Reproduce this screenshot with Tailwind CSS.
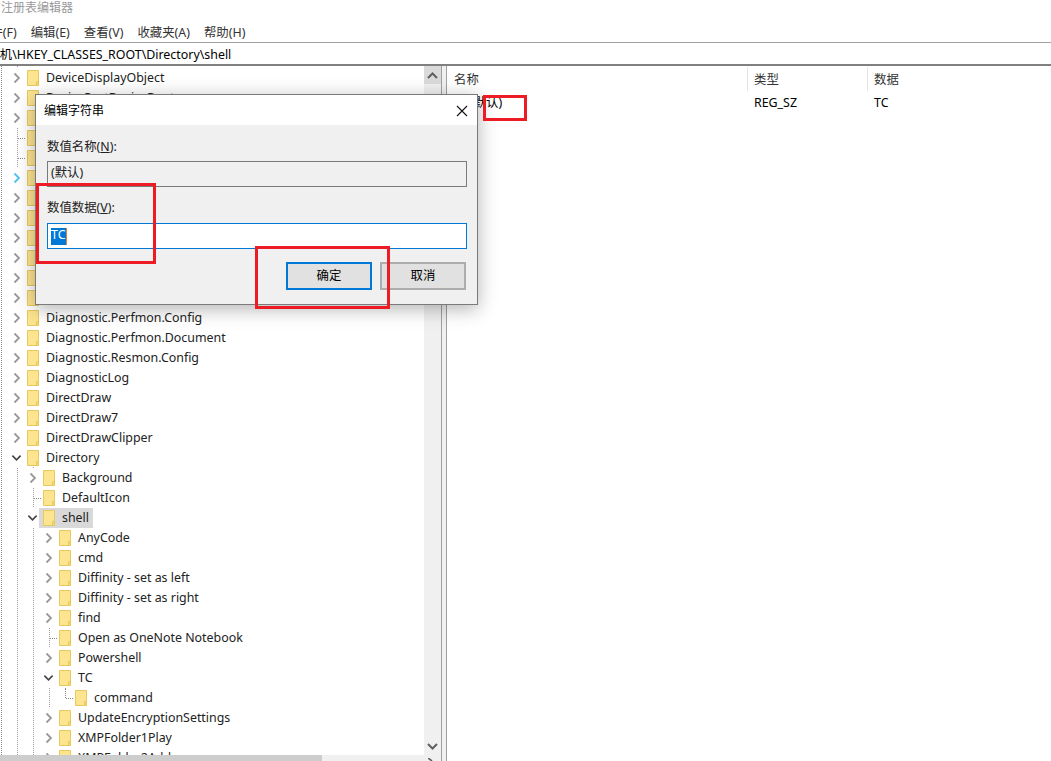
<!DOCTYPE html>
<html lang="zh-CN">
<head>
  <meta charset="UTF-8">
  <title>注册表编辑器</title>
  <script src="https://cdn.jsdelivr.net/npm/@tailwindcss/browser@4"></script>
</head>
<body class="bg-white overflow-hidden font-['Noto_Sans','Noto_Sans_CJK_SC',sans-serif] text-[12.4px] text-black">
<div class="relative w-[1051px] h-[761px] overflow-hidden flex flex-col">

  <!-- title -->
  <div class="h-[15px] pl-[1px] text-[12px] text-[#9a9a9a] leading-[16px] whitespace-nowrap">注册表编辑器</div>

  <!-- menu -->
  <div class="h-[26px] flex items-center gap-[14px] -ml-[22px] text-[#333] whitespace-nowrap pt-[11px]">
    <span>文件(F)</span><span>编辑(E)</span><span>查看(V)</span><span>收藏夹(A)</span><span>帮助(H)</span>
  </div>

  <!-- address bar -->
  <div class="h-[24px] mt-[1px] pt-[3px] border-t border-[#a0a0a0] border-b-2 border-b-[#808080] flex items-center -ml-[25px] whitespace-nowrap">计算机\HKEY_CLASSES_ROOT\Directory\shell</div>

  <div class="flex-1 flex min-h-0">
    <!-- tree -->
    <div class="w-[441px] shrink-0 relative flex flex-col overflow-hidden">
      <div class="flex flex-1 min-h-0">
        <div id="tree" class="w-[424px] pt-[2px] relative overflow-hidden">
          <div class="absolute left-[1px] top-0 bottom-0 border-l border-dotted border-[#8a8a8a]"></div>
          <div class="absolute left-[17px] top-0 bottom-0 border-l border-dotted border-[#a0a0a0]"></div>
          <div class="absolute left-[33px] top-[401px] bottom-0 border-l border-dotted border-[#a0a0a0]"></div>
          <div class="absolute left-[49px] top-[461px] bottom-0 border-l border-dotted border-[#a0a0a0]"></div>
        </div>
        <div class="w-[17px] bg-[#f0f0f0] flex flex-col justify-between items-center">
          <div class="w-full h-[18px] bg-[#dadada] flex items-center justify-center">
            <svg width="11" height="7" viewBox="0 0 11 7" fill="none" stroke="#606060" stroke-width="2"><path d="M1 6l4.5-4.5L10 6"/></svg>
          </div>
          <svg class="mb-[5px]" width="11" height="7" viewBox="0 0 11 7" fill="none" stroke="#606060" stroke-width="2"><path d="M1 1l4.5 4.5L10 1"/></svg>
        </div>
      </div>
      <div class="h-[6px] bg-[#f0f0f0] shrink-0 flex justify-between pr-[8px]">
        <div class="h-full w-[322px] bg-[#cdcdcd]"></div>
        <svg class="mt-[3px]" width="5" height="3" viewBox="0 0 5 3" fill="none" stroke="#606060" stroke-width="1.6"><path d="M0 0l4 3"/></svg>
      </div>
    </div>

    <!-- splitter -->
    <div class="w-[6px] border-l border-r border-[#a0a0a0] bg-[#f0f0f0] shrink-0"></div>

    <!-- values list -->
    <div class="flex-1 min-w-0 pt-[1px]">
      <div class="flex h-[24px] items-center text-[#333]">
        <div class="w-[301px] pl-[7px] pt-[2px] h-full flex items-center border-r border-[#e5e5e5]">名称</div>
        <div class="w-[120px] pl-[6px] pt-[2px] h-full flex items-center border-r border-[#e5e5e5]">类型</div>
        <div class="pl-[6px] pt-[2px]">数据</div>
      </div>
      <div class="flex h-[24px] items-center">
        <div class="w-[301px] pl-[5px] flex items-center gap-[2px]">
          <span class="w-4 h-4 border border-[#6a8fc0] bg-[#eef3fa] text-[9px] leading-[14px] text-center text-[#2a60b0]">ab</span>
          <span>(默认)</span>
        </div>
        <div class="w-[120px] pl-[6px]">REG_SZ</div>
        <div class="pl-[6px]">TC</div>
      </div>
    </div>
  </div>

  <!-- edit string dialog -->
  <div class="absolute left-[35px] top-[94px] w-[443px] h-[211px] border border-[#7a7a7a] bg-[#f0f0f0] shadow-[0_4px_18px_rgba(0,0,0,0.3)] flex flex-col">
    <div class="h-[30px] bg-white flex items-center justify-between pl-[8px] pr-[9px] pt-[1px] shrink-0 text-[12px]">
      <span>编辑字符串</span>
      <svg width="12" height="12" viewBox="0 0 12 12" fill="none" stroke="#111" stroke-width="1.1"><path d="M1 1l10 10M11 1L1 11"/></svg>
    </div>
    <div class="flex-1 px-[11px] flex flex-col">
      <div class="mt-[12px] h-[20px] leading-[20px] text-[#222]">数值名称(<u>N</u>):</div>
      <div class="mt-[4px] h-[26px] w-[420px] border border-[#7a7a7a] flex items-center pl-[3px] pb-[2px] text-[#222]">(默认)</div>
      <div class="mt-[11px] h-[20px] leading-[20px] text-[#222]">数值数据(<u>V</u>):</div>
      <div class="mt-[5px] h-[26px] w-[420px] border border-[#0078d7] bg-white flex items-center pl-[3px]">
        <span class="bg-[#0078d7] text-white h-[17px] leading-[14px] w-[16px] border-r border-[#e08030]">TC</span>
      </div>
      <div class="mt-[13px] flex justify-end gap-[8px] w-[420px] pr-[1px]">
        <div class="w-[86px] h-[28px] border-2 border-[#0078d7] bg-[#e1e1e1] flex items-center justify-center">确定</div>
        <div class="w-[86px] h-[28px] border-2 border-[#adadad] bg-[#e1e1e1] flex items-center justify-center">取消</div>
      </div>
    </div>
  </div>

  <!-- red annotation boxes -->
  <div class="absolute left-[36px] top-[183px] w-[120px] h-[81px] border-[3px] border-[#ed1c24]"></div>
  <div class="absolute left-[255px] top-[246px] w-[135px] h-[63px] border-[3px] border-[#ed1c24]"></div>
  <div class="absolute left-[483px] top-[95px] w-[44px] h-[26px] border-[3px] border-[#ed1c24]"></div>
</div>

<script>
  // [name, level, arrow: r = closed, d = open, b = hover blue, n = none]
  const rows = [
    ['DeviceDisplayObject',0,'r'],['DevicePortDeviceRoot',0,'r'],['DeviceForce',0,'r'],['DeviceIcon',0,'n'],
    ['DeviceKey',0,'n'],['DeviceSync',0,'b'],['DevLib',0,'r'],['DfsShell',0,'r'],['DfsVolume',0,'r'],
    ['DHCP',0,'r'],['Diagnostic.Cabinet',0,'r'],['Diagnostic.Perfmon',0,'r'],
    ['Diagnostic.Perfmon.Config',0,'r'],['Diagnostic.Perfmon.Document',0,'r'],['Diagnostic.Resmon.Config',0,'r'],
    ['DiagnosticLog',0,'r'],['DirectDraw',0,'r'],['DirectDraw7',0,'r'],['DirectDrawClipper',0,'r'],
    ['Directory',0,'d'],['Background',1,'r'],['DefaultIcon',1,'n'],['shell',1,'d'],
    ['AnyCode',2,'r'],['cmd',2,'r'],['Diffinity - set as left',2,'r'],['Diffinity - set as right',2,'r'],
    ['find',2,'r'],['Open as OneNote Notebook',2,'n'],['Powershell',2,'r'],['TC',2,'d'],
    ['command',3,'n'],['UpdateEncryptionSettings',2,'r'],['XMPFolder1Play',2,'r'],['XMPFolder2Add',2,'r']
  ];
  const indent = ['w-[11px]','w-[27px]','w-[43px]','w-[59px]'];
  const chevrons = {
    r: '<svg width="8" height="12" viewBox="0 0 8 12" fill="none" stroke="#9a9a9a" stroke-width="1.8"><path d="M1.5 1.5L6 6l-4.5 4.5"/></svg>',
    b: '<svg width="8" height="12" viewBox="0 0 8 12" fill="none" stroke="#4dc4ee" stroke-width="1.8"><path d="M1.5 1.5L6 6l-4.5 4.5"/></svg>',
    d: '<svg width="12" height="8" viewBox="0 0 12 8" fill="none" stroke="#444" stroke-width="1.8"><path d="M1.5 1.5L6 6l4.5-4.5"/></svg>',
    n: ''
  };
  const folder = '<svg class="shrink-0" width="12" height="16" viewBox="0 0 12 16"><path d="M.5.5h11v15H.5z" fill="#fde58f" stroke="#e8c95f"/><path d="M9.5 15.5v-4h2v4z" fill="#fbd860" stroke="#e8c95f"/></svg>';
  let html = '';
  rows.forEach(([name, level, arrow]) => {
    let dots = arrow === 'n' ? '<span class="absolute left-[7px] top-1/2 w-[7px] border-t border-dotted border-[#8a8a8a]"></span>' : '';
    if (name === 'command') dots += '<span class="absolute left-[6px] top-0 h-[10px] border-l border-dotted border-[#8a8a8a]"></span>';
    const box = arrow === 'n' ? '' : 'bg-white';
    const label = name === 'shell'
      ? '<span class="bg-[#d9d9d9] flex items-center h-5 -ml-[4px] pl-[4px] pr-[4px]">' + folder + '<span class="ml-[7px]">shell</span></span>'
      : folder + '<span class="ml-[7px]">' + name + '</span>';
    html += '<div class="relative flex items-center h-5 whitespace-nowrap text-[#222]">'
      + '<span class="' + indent[level] + ' shrink-0"></span>'
      + '<span class="relative w-[11px] h-5 mr-[5px] flex items-center justify-center shrink-0 ' + box + '">' + chevrons[arrow] + dots + '</span>'
      + label + '</div>';
  });
  document.getElementById('tree').insertAdjacentHTML('beforeend', '<div class="relative">' + html + '</div>');
</script>
</body>
</html>
